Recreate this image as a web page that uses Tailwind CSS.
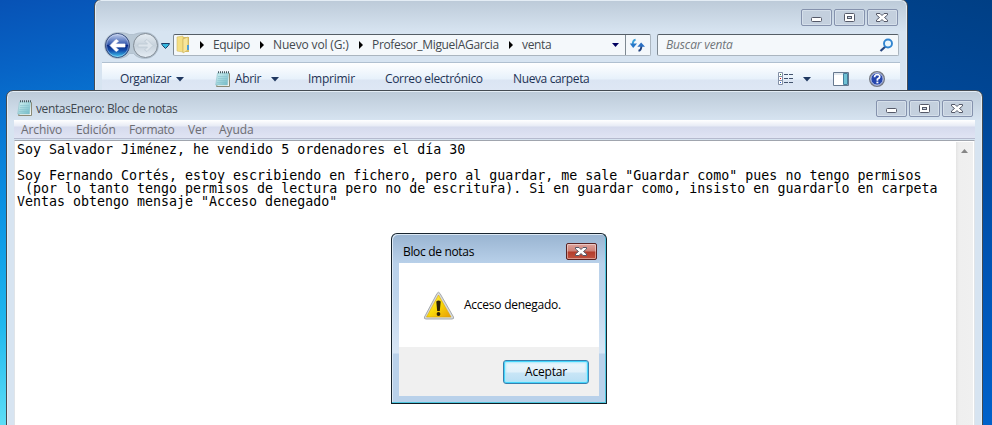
<!DOCTYPE html>
<html lang="es"><head><meta charset="utf-8"><title>Bloc de notas</title>
<script src="https://cdn.jsdelivr.net/npm/@tailwindcss/browser@4"></script></head>
<body class="relative w-[992px] h-[425px] overflow-hidden bg-[#0050b0] font-['Open_Sans','Noto_Sans',sans-serif] text-[12px] leading-4 whitespace-nowrap tracking-[-.33px]">
<svg width="0" height="0" class="absolute"><defs>
<linearGradient id="pad" x2="1" y2="1"><stop stop-color="#d5f2f3"/><stop offset="1" stop-color="#6eb9c6"/></linearGradient>
<symbol id="note" viewBox="0 0 16 16"><path d="M3.5 2.5h11v13H1.5l1-3z" fill="#f4f6f3" stroke="#8b8a76"/><path d="M2.5 2h11l-1 12H.7z" fill="url(#pad)" stroke="#8ec2cb" stroke-width=".6"/><path d="M3 5.5h9M3 7.5h9M2.5 9.5h9M2 11.5h9" stroke="#82bfca" stroke-width=".5"/><path d="M3 1.2h11" stroke="#46595f" stroke-width="2" stroke-dasharray="1 1"/></symbol>
<symbol id="min" viewBox="0 0 30 16"><rect x="9.500" y="7.500" width="10" height="4" rx="1" fill="#fff" stroke="#555968"/></symbol>
<symbol id="max" viewBox="0 0 30 16"><rect x="9.500" y="3.500" width="10" height="8" rx="1" fill="#fff" stroke="#555968"/><rect x="12.500" y="6.500" width="4" height="2" fill="#c9d5e3" stroke="#555968"/></symbol>
<symbol id="x" viewBox="0 0 30 16"><path d="M9.500 3.500h3.500l2 2 2-2h3.500v1.500l-3 2.500 3 2.500v1.500h-3.500l-2-2-2 2h-3.500v-1.500l3-2.500-3-2.500z" fill="#fff" stroke="#555968"/></symbol>
</defs></svg>
<div class="absolute left-0 top-0 w-[100px] h-[425px] bg-[linear-gradient(170deg,#0752b5_0px,#0764c6_70px,#0878d4_130px,#0b94e4_210px,#20b8ee_320px,#60e0f7_425px)]"></div>
<div class="absolute right-0 top-0 w-[92px] h-[425px] bg-[linear-gradient(195deg,#003f85,#004797_25%,#0055b5_60%,#0063cd)]"></div>

<!-- Explorador -->
<div class="absolute left-[94px] top-[-1px] w-[814px] h-[200px] rounded-t-[7px] border border-[#444c56] bg-[linear-gradient(#bccad8,#d7e4f1_32px)] shadow-[inset_0_0_0_1px_#e4edf5] px-[7px] flex flex-col">
 <div class="flex justify-end gap-[2px] pt-[9px] pr-[2px] h-[30px] shrink-0">
  <div class="w-[31px] h-[17px] rounded-[2px] border border-[#8592ad] bg-[#c4d0de] shadow-[inset_0_0_0_1px_#d5dfea]"><svg class="w-[30px] h-4"><use href="#min"/></svg></div>
  <div class="w-[31px] h-[17px] rounded-[2px] border border-[#8592ad] bg-[#c4d0de] shadow-[inset_0_0_0_1px_#d5dfea]"><svg class="w-[30px] h-4"><use href="#max"/></svg></div>
  <div class="w-[31px] h-[17px] rounded-[2px] border border-[#8592ad] bg-[#c4d0de] shadow-[inset_0_0_0_1px_#d5dfea]"><svg class="w-[30px] h-4 -ml-px"><use href="#x"/></svg></div>
 </div>
 <div class="flex h-[33px] items-start shrink-0">
  <svg class="w-[71px] h-[33px] shrink-0" viewBox="0 0 71 33"><defs><linearGradient id="b" x2="0" y2="1"><stop stop-color="#c6d2ef"/><stop offset=".45" stop-color="#355aae"/><stop offset=".5" stop-color="#0b2b85"/><stop offset=".72" stop-color="#1451ae"/><stop offset="1" stop-color="#42d0f5"/></linearGradient><linearGradient id="g" x2="0" y2="1"><stop stop-color="#e6edf3"/><stop offset=".5" stop-color="#c7d2dc"/><stop offset="1" stop-color="#e5edf4"/></linearGradient></defs>
  <path d="M15.500 2.500q8 0 12 2h4q4-2 12-2a13 13 0 0 1 0 26q-8 0-12-5h-4q-4 5-12 5a13 13 0 0 1 0-26z" fill="#b9c8d5" stroke="#a9b8c5" stroke-width=".7"/>
  <circle cx="15.500" cy="15.500" r="12" fill="url(#b)" stroke="#394e7c"/><circle cx="15.500" cy="15.500" r="11" fill="none" stroke="#dce7fa" stroke-opacity=".55" stroke-width=".8"/><path d="M8 15.500l6-6 2.500 1.500-3 3H23v3h-9.500l3 3-2.500 1.500z" fill="#fff" stroke="#fff" stroke-width=".7"/>
  <circle cx="43.500" cy="15.500" r="12" fill="url(#g)" stroke="#818b95"/><path d="M51 15.500l-6-6-2.500 1.500 3 3H36v3h9.500l-3 3 2.500 1.500z" fill="#dde5ec" stroke="#bdc9d3" stroke-width=".8"/>
  <path d="M59.500 13.500h8l-1 2-3 3-3-3z" fill="#35b6dd" stroke="#1c3d69"/></svg>
  <div class="mt-[4px] flex h-[22px] w-[478px] border border-[#aab5bf] border-t-[#555e66] border-l-[#7e8992] bg-[#f4f8fb] rounded-[2px] text-[#43494f]">
   <svg class="w-[39px] h-5 shrink-0" viewBox="0 0 39 20"><path d="M9 2h6v15H9z" fill="#d7bd67"/><path d="M3 2l6-1v16l-6-1z" fill="#f5df83" stroke="#d5bc65" stroke-width=".6"/><path d="M9 4l5-2v13l-5 3z" fill="#f8e69a" stroke="#cbaf57" stroke-width=".6"/><path d="M14 10v5" stroke="#4fa0d8" stroke-width="2"/><path d="M26 6l4 4-4 4z" fill="#000"/></svg>
   <span class="w-[46px] mt-[2px]">Equipo</span>
   <svg class="w-[14px] h-5" viewBox="0 0 14 20"><path d="M1 6l4 4-4 4z"/></svg>
   <span class="w-[85px] mt-[2px] tracking-[-.15px]">Nuevo vol (G:)</span>
   <svg class="w-[14px] h-5" viewBox="0 0 14 20"><path d="M1 6l4 4-4 4z"/></svg>
   <span class="w-[136px] mt-[2px] tracking-[-.33px]">Profesor_MiguelAGarcia</span>
   <svg class="w-[14px] h-5" viewBox="0 0 14 20"><path d="M1 6l4 4-4 4z"/></svg>
   <span class="w-[90px] mt-[2px]">venta</span>
   <svg class="w-[13px] h-5" viewBox="0 0 13 20"><path d="M0 8h7l-3.500 4z" fill="#000060"/></svg>
   <svg class="w-[25px] h-5 border-l border-[#7e8992]" viewBox="0 0 25 20"><path d="M10 4.500q-3 .5-3 5" fill="none" stroke="#3ba0d8" stroke-width="2"/><path d="M4 8.500h7.500l-4 4.500z" fill="#2878c8"/><path d="M13 16q3-.5 3-5" fill="none" stroke="#20407c" stroke-width="2"/><path d="M11.800 11.800h8l-4-4.500z" fill="#2b6fc2"/></svg>
  </div>
  <div class="mt-[4px] ml-[6px] flex h-[22px] w-[242px] justify-between border border-[#aab5bf] border-t-[#555e66] border-l-[#7e8992] bg-[#f4f8fb] rounded-[2px] text-[#70757a] italic pl-2"><span class="mt-[2px] tracking-[-.15px]">Buscar venta</span>
   <svg class="w-5 h-5" viewBox="0 0 20 20"><path d="M8 11l-5.500 5" stroke="#27467f" stroke-width="2.200"/><circle cx="10" cy="8.500" r="4" fill="#eaf6fc" stroke="#3185d0" stroke-width="1.900"/></svg></div>
 </div>
 <div class="-mt-px h-[32px] shrink-0 border-t border-[#b0c0d0] bg-[linear-gradient(#ffffff,#e7f1fb_16px,#dbe5f3_17px,#dfe8f5)] flex items-center text-[#1e3355]">
  <span class="ml-[18px] w-[56px] tracking-[-.45px]">Organizar</span><svg class="w-[39px] h-5" viewBox="0 0 39 20"><path d="M0 8h8l-4 4.500z" fill="#203860"/></svg>
  <svg class="w-4 h-4 mr-[4px]"><use href="#note"/></svg><span class="w-[36px]">Abrir</span><svg class="w-[37px] h-5" viewBox="0 0 37 20"><path d="M0 8h8l-4 4.500z" fill="#203860"/></svg>
  <span class="w-[77px] tracking-[-.25px]">Imprimir</span><span class="w-[128px]">Correo electrónico</span><span class="tracking-[-.38px]">Nueva carpeta</span>
  <svg class="ml-auto mr-[15px] w-[109px] h-5" viewBox="0 0 109 20"><g fill="#fff" stroke="#8390a6"><path d="M2.500 3.500h4v4h-4zM2.500 7.500h4v4h-4zM2.500 11.500h4v4h-4z"/></g><path d="M4 5h1v1H4z" fill="#29833c"/><path d="M4 9h1v1H4z" fill="#d20f0f"/><path d="M4 13h1v1H4z" fill="#285bd4"/><path d="M8 5.500h9M8 9.500h9M8 13.500h9" stroke="#43536d" stroke-dasharray="4 1"/><path d="M27 8h8l-4 4.500z" fill="#203860"/><path d="M57.500 3.500h15v13h-15z" fill="#fff" stroke="#66788f"/><path d="M58 5h14" stroke="#c5d2df"/><path d="M67.500 4.500h4v11h-4z" fill="#6fc2d5" stroke="#447e9c"/><circle cx="101" cy="10" r="7.300" fill="#2546ad" stroke="#777b83" stroke-width="1.400"/><circle cx="101" cy="10" r="6.200" fill="none" stroke="#d7dceb"/><path d="M98.500 8.300q.2-2.800 2.800-2.800 2.700.2 2.400 2.500-.2 1.200-2.300 2.300v1.500" fill="none" stroke="#fff" stroke-width="1.700"/><path d="M100.400 12.600h2v1.700h-2z" fill="#fff"/></svg>
 </div>
</div>

<!-- Bloc de notas -->
<div class="absolute left-[6px] top-[90px] w-[977px] h-[345px] rounded-t-[7px] border border-[#444b52] bg-[linear-gradient(#bccad8,#d7e4f1_30px)] shadow-[inset_0_0_0_1px_#e4edf5] px-[7px] flex flex-col">
 <div class="h-[29px] shrink-0 flex text-[#40474f] pt-[9px] pr-[2px]">
  <svg class="ml-[3px] w-4 h-4 mr-[3px]"><use href="#note"/></svg><span class="mr-auto pt-px tracking-[-.38px]">ventasEnero: Bloc de notas</span>
  <div class="flex gap-[2px]">
  <div class="w-[31px] h-[17px] rounded-[2px] border border-[#8592ad] bg-[#c4d0de] shadow-[inset_0_0_0_1px_#d5dfea]"><svg class="w-[30px] h-4"><use href="#min"/></svg></div>
  <div class="w-[31px] h-[17px] rounded-[2px] border border-[#8592ad] bg-[#c4d0de] shadow-[inset_0_0_0_1px_#d5dfea]"><svg class="w-[30px] h-4"><use href="#max"/></svg></div>
  <div class="w-[31px] h-[17px] rounded-[2px] border border-[#8592ad] bg-[#c4d0de] shadow-[inset_0_0_0_1px_#d5dfea]"><svg class="w-[30px] h-4 -ml-px"><use href="#x"/></svg></div></div>
 </div>
 <div class="h-[19px] shrink-0 border-b border-[#b5bace] bg-[linear-gradient(#ffffff,#e7ebf5_6px,#d5daed_7px,#e0e4f3)] flex items-center text-[#6d6d72] pt-[2px] pl-[7px] tracking-[-.1px]"><span class="w-[55px]">Archivo</span><span class="w-[53px]">Edición</span><span class="w-[59px] tracking-[-.3px]">Formato</span><span class="w-[31px]">Ver</span><span>Ayuda</span></div>
 <div class="flex-1 mt-px border border-[#a0a5ae] border-b-0 border-x-[#e0e4e8] bg-white flex justify-between">
  <pre class="pl-[2px] pt-[2px] font-['DejaVu_Sans_Mono',monospace] text-[13.290px] tracking-[.008px] leading-[13px] text-black">Soy Salvador Jiménez, he vendido 5 ordenadores el día 30

Soy Fernando Cortés, estoy escribiendo en fichero, pero al guardar, me sale "Guardar como" pues no tengo permisos
 (por lo tanto tengo permisos de lectura pero no de escritura). Si en guardar como, insisto en guardarlo en carpeta
Ventas obtengo mensaje "Acceso denegado"</pre>
  <div class="w-[17px] mt-px mr-px bg-[linear-gradient(90deg,#e4e4e4,#efefef_3px,#f0f0f0)]"><svg class="w-[17px] h-[17px]" viewBox="0 0 17 17"><path d="M5 11l3.500-4L12 11z" fill="#868686"/></svg></div>
 </div>
</div>

<!-- Mensaje -->
<div class="absolute left-[391px] top-[233px] w-[216px] h-[171px] rounded-t-[6px] border border-[#18252f] border-b-[#101d24] shadow-[inset_-1px_-1px_0_0_#4fc6de,inset_1px_1px_0_0_#dce9f5] bg-[linear-gradient(#99b4d1,#b9d1ea_30px,#bdd4ec_60px,#d8e6f5_119px,#b9d1ea_120px)] px-[7px] pb-[7px] flex flex-col">
 <div class="h-[29px] shrink-0 flex justify-between pl-[4px] pr-[2px] pt-[9px] text-black"><span class="pt-px">Bloc de notas</span>
 <div class="w-[31px] h-[17px] rounded-[2px] border border-[#5a2323] bg-[linear-gradient(#dfa39c,#cd8076_7px,#b33c2b_8px,#c1523f)] shadow-[inset_0_0_0_1px_#ffffff66]"><svg class="w-[30px] h-4 -ml-px"><use href="#x"/></svg></div></div>
 <div class="h-[84px] shrink-0 bg-white flex items-center pl-[24px] text-black">
  <svg class="w-8 h-8 mr-[9px] mt-[3px]" viewBox="0 0 32 32"><defs><linearGradient id="w" x2="1" y2="1"><stop stop-color="#fff36a"/><stop offset=".5" stop-color="#f8d90a"/><stop offset="1" stop-color="#e99c08"/></linearGradient></defs><path d="M14 2.500q1.500-2.500 3 0L30.500 26q.8 2-1.500 2H3q-2.300 0-1.500-2z" fill="#d8dadb" stroke="#a7abad"/><path d="M15.500 4L28 26H3.500z" fill="url(#w)" stroke="#dca809" stroke-width=".6"/><path d="M13.300 10.500q2.200-2 4.400 0L16.800 20h-2.600z" fill="#292006"/><circle cx="15.500" cy="23" r="1.900" fill="#292006"/></svg><span class="tracking-[-.25px]">Acceso denegado.</span></div>
 <div class="flex-1 bg-[#f0f0f0] flex justify-end items-center pr-[10px]"><div class="w-[86px] h-[24px] rounded-[3px] border border-[#377fae] shadow-[inset_0_0_0_1px_#45d5fb,inset_0_0_2px_2px_#a8e8fb] bg-[linear-gradient(#edf6fb,#e1f1fa_11px,#c8e5f6_12px,#b9dff4)] text-center leading-[22px] text-black tracking-[-.2px]">Aceptar</div></div>
</div>
</body></html>
